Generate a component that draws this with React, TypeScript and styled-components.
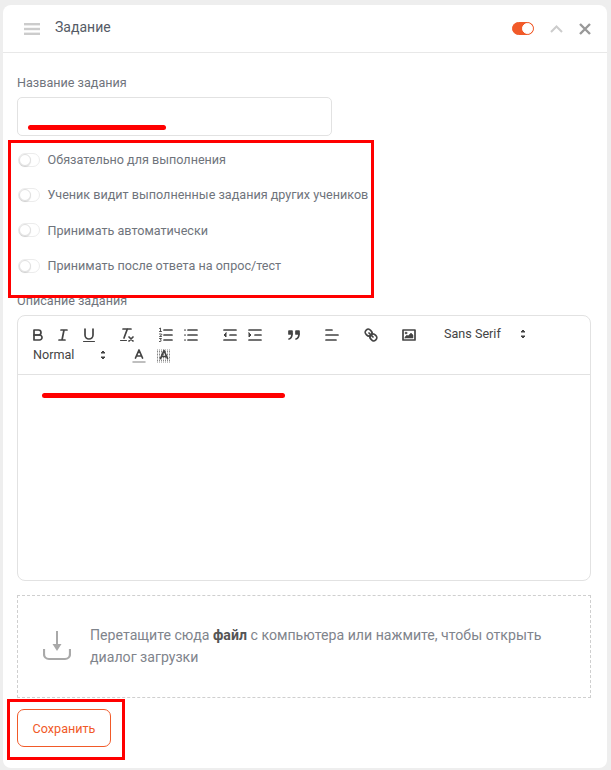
import styled, { createGlobalStyle } from 'styled-components';
import { ReactNode } from 'react';

const orange = '#f15a29';
const line = '#e2e2e2';
const ink = '#444';

const GlobalStyle = createGlobalStyle`
  html, body {
    margin: 0;
    padding: 0;
    background: #eeeeee;
  }
  body {
    font-family: Roboto, "Liberation Sans", sans-serif;
  }
`;

const Card = styled.div`
  position: relative;
  box-sizing: border-box;
  width: 604px;
  height: 763px;
  margin: 5px 0 0 3px;
  background: #fff;
  border-radius: 8px;
`;

const Header = styled.div`
  display: flex;
  align-items: center;
  height: 47px;
  padding: 0 16px 0 21px;
  border-bottom: 1px solid #e8e8e8;
`;

const Title = styled.div`
  flex: 1;
  margin-left: 15px;
  padding-bottom: 3px;
  font-size: 14px;
  letter-spacing: 0.02px;
  color: #555b66;
`;

const Switch = styled.span<{ $on?: boolean }>`
  position: relative;
  display: block;
  box-sizing: border-box;
  width: 22px;
  height: ${(p) => (p.$on ? 13 : 14)}px;
  border-radius: 7px;
  background: ${(p) => (p.$on ? orange : '#fff')};
  border: 1px solid ${(p) => (p.$on ? orange : '#ececec')};
  flex: none;

  &::after {
    content: '';
    position: absolute;
    top: 0;
    ${(p) => (p.$on ? 'right: 0;' : 'left: 0;')}
    box-sizing: border-box;
    width: ${(p) => (p.$on ? 11 : 12)}px;
    height: ${(p) => (p.$on ? 11 : 12)}px;
    border-radius: 50%;
    background: #fff;
    border: 1px solid ${(p) => (p.$on ? '#fff' : '#e0e0e0')};
    box-shadow: ${(p) => (p.$on ? 'none' : '0 1px 1px rgba(0, 0, 0, 0.12)')};
  }
`;

const HeaderActions = styled.div`
  display: flex;
  align-items: center;
  gap: 16px;
`;

const Body = styled.div`
  padding: 22px 16px 0 14px;
`;

const FieldLabel = styled.div`
  font-size: 12.6px;
  line-height: 16px;
  color: #6f747c;
`;

const NameInput = styled.div`
  position: relative;
  box-sizing: border-box;
  width: 315px;
  height: 39px;
  margin-top: 6px;
  border: 1px solid ${line};
  border-radius: 5px;
`;

const NameMark = styled.div`
  position: absolute;
  left: 10px;
  top: 27px;
  width: 138px;
  height: 5px;
  border-radius: 3px;
  background: #f00;
`;

const Options = styled.div`
  display: flex;
  flex-direction: column;
  margin-top: 6px;
`;

const Option = styled.div`
  display: flex;
  align-items: center;
  gap: 8px;
  height: 35.3px;
  padding-left: 0.5px;
  font-size: 12.6px;
  color: #6f747c;
`;

const DescriptionLabel = styled(FieldLabel)`
  margin-top: 10px;
`;

const Editor = styled.div`
  position: relative;
  box-sizing: border-box;
  height: 266px;
  margin-top: 6px;
  border: 1px solid ${line};
  border-radius: 8px;
`;

const Toolbar = styled.div`
  box-sizing: border-box;
  display: flex;
  flex-wrap: wrap;
  align-content: flex-start;
  column-gap: 13px;
  height: 59px;
  padding: 8px 7px;
  border-bottom: 1px solid ${line};
`;

const ToolGroup = styled.span`
  display: flex;
  height: 21px;
`;

const ToolButton = styled.span`
  display: flex;
  align-items: center;
  justify-content: center;
  width: 25.5px;
  height: 21px;

  svg {
    width: 18px;
    height: 18px;
    fill: none;
    stroke: ${ink};
    stroke-width: 1.7;
    stroke-linecap: round;
    stroke-linejoin: round;
  }
`;

const Picker = styled.span<{ $width: number; $indent: number }>`
  position: relative;
  display: block;
  box-sizing: border-box;
  width: ${(p) => p.$width}px;
  height: 21px;
  padding-left: ${(p) => p.$indent}px;
  font-size: 12.6px;
  line-height: 20px;
  color: ${ink};

  svg {
    position: absolute;
    right: 1px;
    top: 1px;
    width: 18px;
    height: 18px;
    fill: ${ink};
    stroke: ${ink};
    stroke-linejoin: round;
  }
`;

const EditorMark = styled.div`
  position: absolute;
  left: 24px;
  top: 77px;
  width: 243px;
  height: 5px;
  border-radius: 3px;
  background: #f00;
`;

const Dropzone = styled.div`
  box-sizing: border-box;
  display: flex;
  align-items: center;
  gap: 19px;
  height: 103px;
  margin-top: 14px;
  padding: 0 40px 2px 25px;
  border: 1px dashed #cfcfcf;
  font-size: 14.15px;
  line-height: 22px;
  color: #7f848c;

  svg {
    flex: none;
  }

  b {
    color: #555;
    font-weight: 700;
  }
`;

const SaveButton = styled.button`
  display: block;
  box-sizing: border-box;
  width: 94px;
  height: 38px;
  margin-top: 11px;
  padding: 0;
  background: #fff;
  border: 1px solid ${orange};
  border-radius: 7px;
  color: ${orange};
  font-family: inherit;
  font-size: 12.6px;
`;

const Callout = styled.div<{ $left: number; $top: number; $width: number; $height: number }>`
  position: absolute;
  box-sizing: border-box;
  left: ${(p) => p.$left}px;
  top: ${(p) => p.$top}px;
  width: ${(p) => p.$width}px;
  height: ${(p) => p.$height}px;
  border: 3px solid #f00;
  pointer-events: none;
`;

const Tool = ({ children }: { children: ReactNode }) => (
  <ToolButton>
    <svg viewBox="0 0 18 18">{children}</svg>
  </ToolButton>
);

const PickerArrows = () => (
  <svg viewBox="0 0 18 18">
    <polygon points="7 11 9 13 11 11 7 11" />
    <polygon points="7 7 9 5 11 7 7 7" />
  </svg>
);

const MenuIcon = () => (
  <svg width="16" height="12" viewBox="0 0 16 12" fill="#cccccc">
    <rect width="16" height="2.4" y="0" />
    <rect width="16" height="2.4" y="4.8" />
    <rect width="16" height="2.4" y="9.6" />
  </svg>
);

const ChevronUp = () => (
  <svg width="13" height="8" viewBox="0 0 13 8" fill="none" stroke="#cccccc" strokeWidth="2">
    <polyline points="1,7 6.5,1.5 12,7" />
  </svg>
);

const CloseIcon = () => (
  <svg width="12" height="12" viewBox="0 0 12 12" fill="none" stroke="#999" strokeWidth="2.4">
    <path d="M1 1l10 10M11 1L1 11" />
  </svg>
);

const UploadIcon = () => (
  <svg width="28" height="30" viewBox="0 0 28 30" fill="none" stroke="#a9a9a9" strokeWidth="2">
    <path d="M14 0v14" />
    <path d="M9.5 13h9L14 20z" fill="#a9a9a9" stroke="none" />
    <path d="M1 18v5a5 5 0 0 0 5 5h16a5 5 0 0 0 5-5v-5" strokeWidth="2.2" />
  </svg>
);

const options = [
  'Обязательно для выполнения',
  'Ученик видит выполненные задания других учеников',
  'Принимать автоматически',
  'Принимать после ответа на опрос/тест',
];

const App = () => (
  <>
    <GlobalStyle />
    <Card>
      <Header>
        <MenuIcon />
        <Title>Задание</Title>
        <HeaderActions>
          <Switch $on />
          <ChevronUp />
          <CloseIcon />
        </HeaderActions>
      </Header>
      <Body>
        <FieldLabel>Название задания</FieldLabel>
        <NameInput>
          <NameMark />
        </NameInput>
        <Options>
          {options.map((text) => (
            <Option key={text}>
              <Switch />
              {text}
            </Option>
          ))}
        </Options>
        <DescriptionLabel>Описание задания</DescriptionLabel>
        <Editor>
          <Toolbar>
            <ToolGroup>
              <Tool>
                <path d="M5,4H9.5A2.5,2.5,0,0,1,12,6.5v0A2.5,2.5,0,0,1,9.5,9H5A0,0,0,0,1,5,9V4A0,0,0,0,1,5,4Z" />
                <path d="M5,9h5.5A2.5,2.5,0,0,1,13,11.5v0A2.5,2.5,0,0,1,10.5,14H5a0,0,0,0,1,0,0V9A0,0,0,0,1,5,9Z" />
              </Tool>
              <Tool>
                <path d="M7 4h6M5 14h6M8 14l2-10" />
              </Tool>
              <Tool>
                <path d="M5,3V9a4,4,0,0,0,4,4H9a4,4,0,0,0,4-4V3" />
                <path d="M3.5 15.5h11" strokeWidth="1" />
              </Tool>
            </ToolGroup>
            <ToolGroup>
              <Tool>
                <path d="M5 3h8M6 12l3.35-9M11 11l4 4M15 11l-4 4" />
                <path d="M2.5 14.5h6" strokeWidth="1" />
              </Tool>
            </ToolGroup>
            <ToolGroup>
              <Tool>
                <path d="M7 4h8M7 9h8M7 14h8" />
                <path d="M2.5 2.5l1-.5v3.5M2.5 5.5h2M2.5 8h1.6a.6.6 0 0 1 .2 1.2L2.5 10.5h2M2.5 12.5h2L3.4 14a.7.7 0 0 1 0 1.5h-1" strokeWidth="0.9" />
              </Tool>
              <Tool>
                <path d="M6 4h9M6 9h9M6 14h9M3 4h0M3 9h0M3 14h0" />
              </Tool>
            </ToolGroup>
            <ToolGroup>
              <Tool>
                <path d="M3 14h12M3 4h12M9 9h6" />
                <polygon points="5 7 5 11 3 9 5 7" fill={ink} strokeWidth="1" />
              </Tool>
              <Tool>
                <path d="M3 14h12M3 4h12M9 9h6" />
                <polygon points="3 7 3 11 5 9 3 7" fill={ink} strokeWidth="1" />
              </Tool>
            </ToolGroup>
            <ToolGroup>
              <Tool>
                <rect width="3" height="3" x="4" y="5" fill={ink} />
                <rect width="3" height="3" x="11" y="5" fill={ink} />
                <path d="M7,8c0,4.031-3,5-3,5" />
                <path d="M14,8c0,4.031-3,5-3,5" />
              </Tool>
            </ToolGroup>
            <ToolGroup>
              <Tool>
                <path d="M3 9h12M3 14h10M3 4h6" />
              </Tool>
            </ToolGroup>
            <ToolGroup>
              <Tool>
                <path d="M7 7l4 4" />
                <path d="M8.9,4.577a3.476,3.476,0,0,1,.36,4.679A3.476,3.476,0,0,1,4.577,8.9C3.185,7.5,2.035,6.4,4.217,4.217S7.5,3.185,8.9,4.577Z" />
                <path d="M13.423,9.1a3.476,3.476,0,0,0-4.679-.36,3.476,3.476,0,0,0,.36,4.679c1.392,1.392,2.5,2.542,4.679.36S14.815,10.5,13.423,9.1Z" />
              </Tool>
            </ToolGroup>
            <ToolGroup>
              <Tool>
                <rect width="12" height="10" x="3" y="4" />
                <circle cx="6" cy="7" r="1" fill={ink} strokeWidth="0.5" />
                <polyline points="5 12 5 11 7 9 8 10 11 7 13 9 13 12 5 12" fill={ink} strokeWidth="0.5" />
              </Tool>
            </ToolGroup>
            <Picker $width={98} $indent={9}>
              Sans Serif
              <PickerArrows />
            </Picker>
            <Picker $width={88} $indent={8}>
              Normal
              <PickerArrows />
            </Picker>
            <ToolGroup>
              <Tool>
                <path d="M3 15h12" stroke="#aaa" strokeWidth="1.5" />
                <path d="M5.5 11L9 3l3.5 8M11.6 9H6.4" />
              </Tool>
              <Tool>
                <path
                  d="M2 3h14M2 4.5h14M2 6h14M2 7.5h14M2 9h14M2 10.5h14M2 12h14M2 13.5h14M2 15h14"
                  stroke="#888"
                  strokeWidth="1"
                  strokeLinecap="butt"
                  strokeDasharray="1 1"
                />
                <path d="M5.5 11.5L9 3.5l3.5 8M11.6 9.5H6.4" strokeWidth="1.7" />
              </Tool>
            </ToolGroup>
          </Toolbar>
          <EditorMark />
        </Editor>
        <Dropzone>
          <UploadIcon />
          <div>
            Перетащите сюда <b>файл</b> с компьютера или нажмите, чтобы открыть диалог загрузки
          </div>
        </Dropzone>
        <SaveButton>Сохранить</SaveButton>
      </Body>
      <Callout $left={5} $top={135} $width={366} $height={158} />
      <Callout $left={4} $top={694} $width={118} $height={61} />
    </Card>
  </>
);

export default App;
